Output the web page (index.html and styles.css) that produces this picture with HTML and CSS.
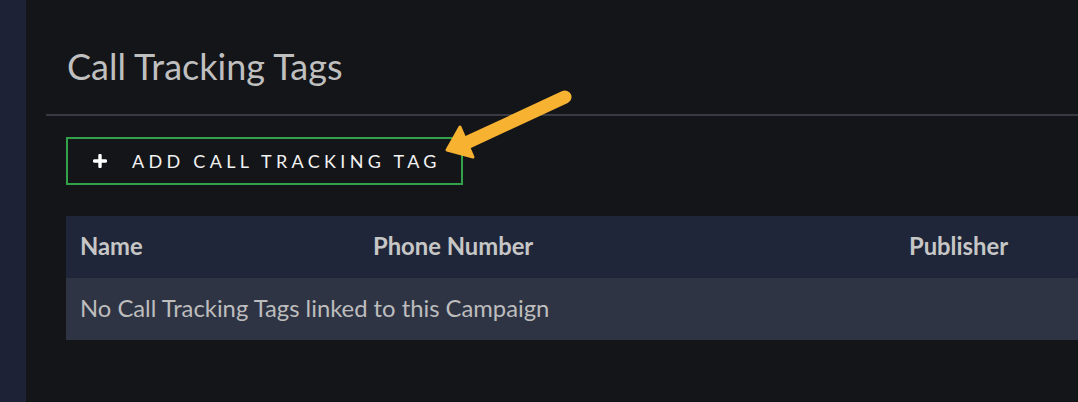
FILE: index.html
```html
<!DOCTYPE html>
<html lang="en">
<head>
<meta charset="utf-8">
<title>Call Tracking Tags</title>
<link rel="stylesheet" href="styles.css">
</head>
<body>
<div class="app">
  <aside class="sidebar"></aside>
  <main class="main">
    <header class="page-header">
      <h1 class="page-title">Call Tracking Tags</h1>
    </header>
    <section class="content">
      <button class="add-btn" type="button">
        <svg class="plus" width="14" height="14" viewBox="0 0 14 14" aria-hidden="true">
          <path d="M7 1.5v11M1.5 7h11" stroke="#ffffff" stroke-width="3.4" stroke-linecap="round"/>
        </svg>
        <span class="add-label">ADD CALL TRACKING TAG</span>
      </button>
      <table class="tags-table">
        <colgroup>
          <col class="col-name">
          <col class="col-phone">
          <col class="col-pub">
        </colgroup>
        <thead>
          <tr>
            <th>Name</th>
            <th>Phone Number</th>
            <th>Publisher</th>
          </tr>
        </thead>
        <tbody>
          <tr>
            <td colspan="3">No Call Tracking Tags linked to this Campaign</td>
          </tr>
        </tbody>
      </table>
    </section>
  </main>
  <svg class="callout-arrow" width="140" height="90" viewBox="0 0 140 90" aria-hidden="true">
    <path d="M125 17 L26 63" stroke="#f7b232" stroke-width="13" stroke-linecap="round" fill="none"/>
    <path d="M7 70 L20 47 L33 77 Z" fill="#f7b232" stroke="#f7b232" stroke-width="3" stroke-linejoin="round"/>
  </svg>
</div>
</body>
</html>
```

FILE: styles.css
```css
* { box-sizing: border-box; }
html, body {
  margin: 0;
  padding: 0;
  background: #141519;
  font-family: Lato, "Noto Sans", sans-serif;
}
.app {
  position: relative;
  display: flex;
  width: 1078px;
  height: 402px;
  overflow: hidden;
}
.sidebar {
  flex: 0 0 26px;
  background: #1d2236;
}
.main {
  flex: 1 1 auto;
  min-width: 0;
  padding-left: 20px;
  overflow: hidden;
}
.page-header {
  padding: 45px 0 26px 21px;
  border-bottom: 2px solid #393943;
}
.page-title {
  margin: 0;
  font-size: 36px;
  line-height: 1.2;
  font-weight: 400;
  color: #bfbfbf;
}
.content {
  padding: 21px 0 0 20px;
}
.add-btn {
  display: flex;
  align-items: center;
  width: 397px;
  height: 48px;
  padding: 0 0 0 25px;
  background: transparent;
  border: 2px solid #31a24a;
  border-radius: 0;
  font-family: Lato, "Noto Sans", sans-serif;
  cursor: pointer;
}
.plus { flex: 0 0 auto; }
.add-label {
  margin-left: 25px;
  font-size: 18px;
  letter-spacing: 4.3px;
  color: #f2f2f2;
  font-weight: 400;
}
.tags-table {
  margin-top: 31px;
  width: 1100px;
  border-collapse: collapse;
  table-layout: fixed;
}
.col-name { width: 293px; }
.col-phone { width: 536px; }
.tags-table th,
.tags-table td {
  height: 62px;
  padding: 0 14px 2px;
  text-align: left;
  font-size: 23.8px;
  white-space: nowrap;
}
.tags-table th {
  background: #20263a;
  color: #c6c6c6;
  font-weight: 700;
}
.tags-table td {
  background: #2f3444;
  color: #bdbdbd;
  font-weight: 400;
}
.callout-arrow {
  position: absolute;
  left: 440px;
  top: 80px;
}
```
